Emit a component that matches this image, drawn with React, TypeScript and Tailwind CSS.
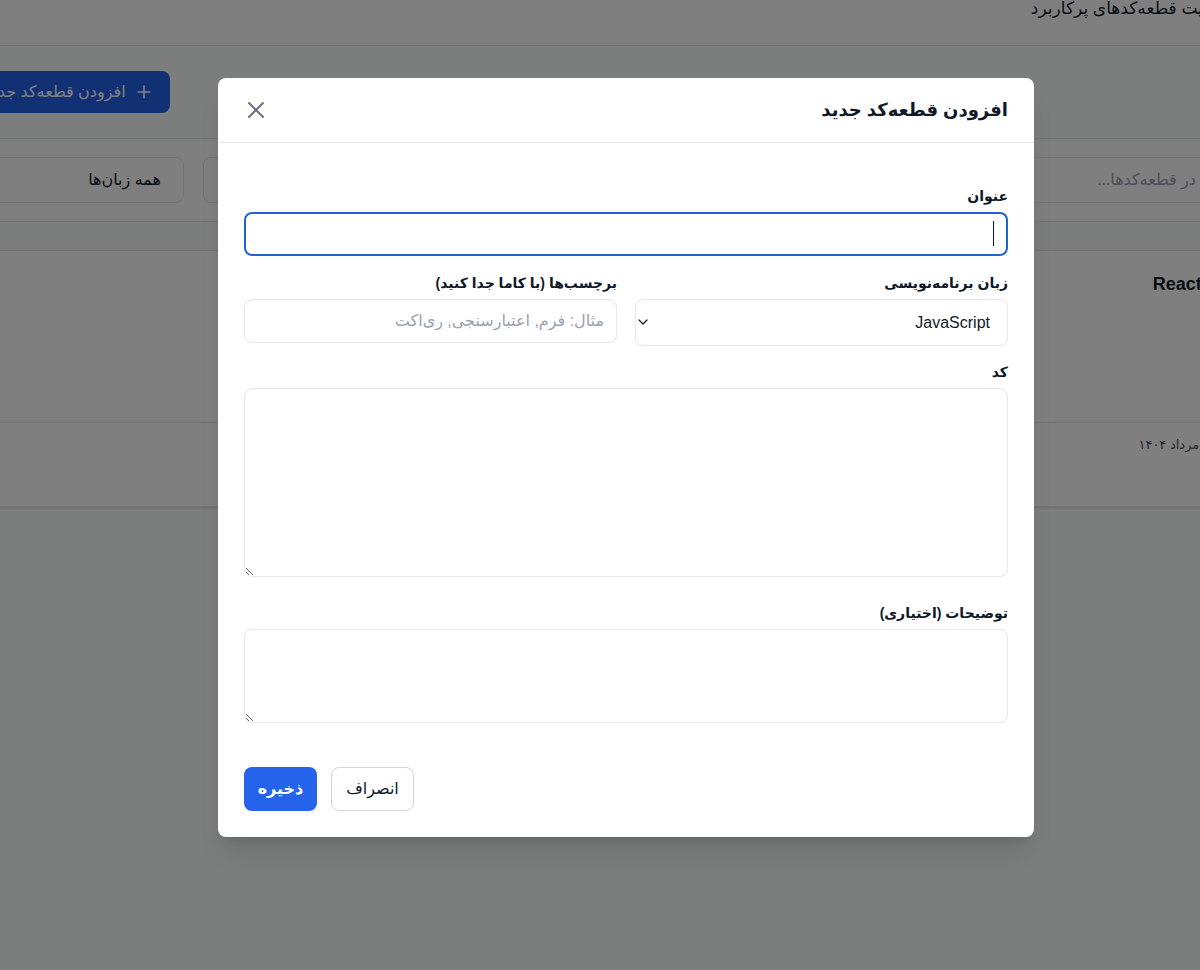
import React from "react";

function XIcon() {
  return (
    <svg width="24" height="24" viewBox="0 0 24 24" fill="none" stroke="#6b7280" strokeWidth="2" strokeLinecap="round">
      <path d="M5 5l14 14M19 5L5 19" />
    </svg>
  );
}

function Chevron() {
  return (
    <svg width="10" height="6" viewBox="0 0 10 6" fill="none" stroke="#111827" strokeWidth="1.2" strokeLinecap="round" strokeLinejoin="round">
      <path d="M1 1l4 4 4-4" />
    </svg>
  );
}

function Card({ title }: { title?: string }) {
  return (
    <div className="h-[257px] rounded-lg border border-gray-200 bg-white shadow-sm">
      {title ? (
        <>
          <div className="px-5 pt-5">
            <div className="text-[18px] font-semibold text-gray-900">{title}</div>
          </div>
          <div className="mt-[124px] border-t border-gray-200 px-5 pt-3 text-[13px] text-gray-600">
            تاریخ: ۴ مرداد ۱۴۰۴
          </div>
        </>
      ) : null}
    </div>
  );
}

function Background() {
  return (
    <div className="ml-[-47px] mr-[-80px]">
      <div className="flex h-[46px] items-start border-b border-gray-200 bg-white pr-[45px]">
        <h1 className="-mt-[6px] text-[17px] leading-[30px] text-gray-900">مدیریت قطعه‌کدهای پرکاربرد</h1>
      </div>
      <div className="px-4">
        <div className="mt-[25px] flex justify-end">
          <button className="flex h-[42px] items-center gap-2 rounded-lg bg-[#2563eb] px-4 text-[16px] text-white">
            <svg width="20" height="20" viewBox="0 0 24 24" fill="none" stroke="white" strokeWidth="2" strokeLinecap="round">
              <path d="M12 5v14M5 12h14" />
            </svg>
            <span>افزودن قطعه‌کد جدید</span>
          </button>
        </div>
        <div className="mt-[25px] flex h-[84px] items-center gap-[19px] rounded-lg border border-gray-200 bg-white px-4">
          <div className="mr-[-14px] flex h-[46px] flex-1 items-center rounded-lg border border-gray-200 px-3 text-[16px] text-gray-400">
            جستجو در قطعه‌کدها...
          </div>
          <div className="flex h-[46px] w-[200px] items-center rounded-lg border border-gray-200 px-5 text-[16px] text-gray-900">
            همه برچسب‌ها
          </div>
          <div className="flex h-[46px] w-[198px] items-center rounded-lg border border-gray-200 pr-[22px] text-[16px] text-gray-900">
            همه زبان‌ها
          </div>
        </div>
        <div className="mt-[28px] grid grid-cols-3 gap-6">
          <Card title="فرم React" />
          <Card />
          <Card title="هوک React" />
        </div>
      </div>
    </div>
  );
}

function Label({ children }: { children: React.ReactNode }) {
  return <label className="mb-1.5 block text-[14px] font-semibold leading-[20px] text-gray-900">{children}</label>;
}

function Modal() {
  return (
    <div dir="rtl" className="ml-[218px] mt-[78px] w-[816px] rounded-lg bg-white shadow-xl">
      <div className="flex h-[65px] items-center justify-between border-b border-gray-200 px-[26px]">
        <h2 className="text-[18px] font-bold text-gray-900">افزودن قطعه‌کد جدید</h2>
        <button className="flex h-6 w-6 items-center justify-center">
          <XIcon />
        </button>
      </div>
      <div className="px-[26px] pb-[26px] pt-[43px]">
        <div>
          <Label>عنوان</Label>
          <div className="relative">
            <input className="block h-[44px] w-full rounded-lg border-2 border-[#1f63d1] bg-white px-3 text-[16px] outline-none" />
            <span className="absolute right-[14px] top-[9px] h-[25px] w-px bg-gray-900" />
          </div>
        </div>
        <div className="mt-[17px] grid grid-cols-2 items-start gap-[18px]">
          <div>
            <Label>زبان برنامه‌نویسی</Label>
            <div className="relative">
              <select className="block h-[47px] w-full appearance-none rounded-lg border border-gray-200 bg-white pl-8 pr-[17px] text-[16px] text-gray-900 outline-none">
                <option>JavaScript</option>
              </select>
              <span className="pointer-events-none absolute left-[3px] top-[20px]">
                <Chevron />
              </span>
            </div>
          </div>
          <div>
            <Label>برچسب‌ها (با کاما جدا کنید)</Label>
            <input
              placeholder="مثال: فرم, اعتبارسنجی, ری‌اکت"
              className="mt-px block h-[44px] w-full rounded-lg border border-gray-200 bg-white px-3 text-[16px] outline-none placeholder:text-gray-400"
            />
          </div>
        </div>
        <div className="mt-4">
          <Label>کد</Label>
          <textarea className="block h-[189px] w-full rounded-lg border border-gray-200 bg-white px-3 py-2 text-[14px] outline-none" />
        </div>
        <div className="mt-[26px]">
          <Label>توضیحات (اختیاری)</Label>
          <textarea className="block h-[94px] w-full rounded-lg border border-gray-200 bg-white px-3 py-2 text-[14px] outline-none" />
        </div>
        <div className="mt-[44px] flex justify-end gap-[14px]">
          <button className="h-[44px] w-[83px] rounded-lg border border-gray-300 bg-white text-[16px] text-gray-900">انصراف</button>
          <button className="h-[44px] w-[73px] rounded-lg bg-[#2563eb] text-[16px] font-semibold text-white">ذخیره</button>
        </div>
      </div>
    </div>
  );
}

export default function App() {
  return (
    <div
      dir="rtl"
      className="relative h-[970px] w-[1200px] overflow-hidden bg-gray-50 font-['Liberation_Sans','DejaVu_Sans',sans-serif]"
    >
      <Background />
      <div dir="ltr" className="absolute inset-0 bg-black/50">
        <Modal />
      </div>
    </div>
  );
}
